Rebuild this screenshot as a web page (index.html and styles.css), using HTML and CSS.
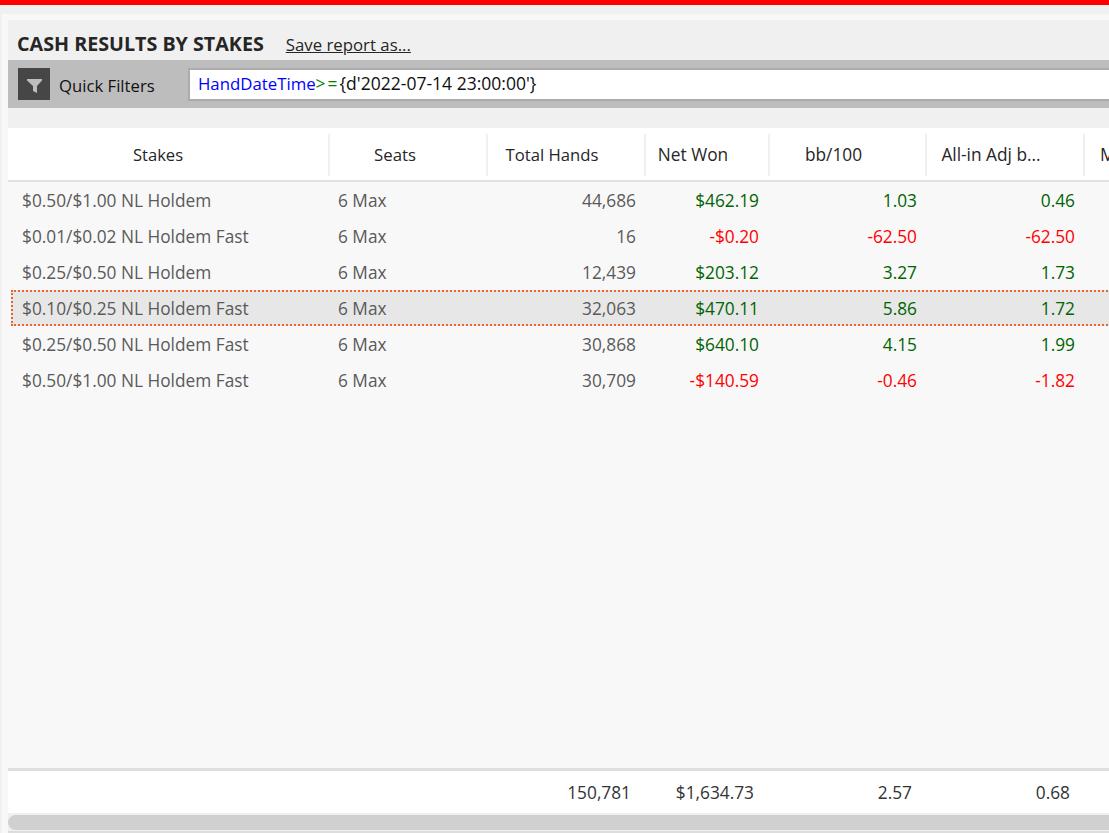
FILE: index.html
```html
<!DOCTYPE html>
<html lang="en">
<head>
<meta charset="utf-8">
<title>Cash Results by Stakes</title>
<link rel="stylesheet" href="styles.css">
</head>
<body>
<div class="redbar"></div>
<div class="shell">
<main class="panel">
  <div class="title-row">
    <h1 class="title">CASH RESULTS BY STAKES</h1>
    <a class="save">Save report as...</a>
  </div>
  <div class="filters">
    <span class="funnel"><svg class="funnel-icon" width="15" height="14" viewBox="0 0 15 14"><path d="M0 0h15v1.5L10 7v7L6 12V7L0 1.5z" fill="#bdbdbd"/></svg></span>
    <span class="filters-label">Quick Filters</span>
    <div class="query"><span class="q-field">HandDateTime</span><span class="q-op">&gt;=</span><span class="q-val">{d'2022-07-14 23:00:00'}</span></div>
  </div>
  <div class="spacer"></div>
  <div class="grid-row head">
    <div class="hc c1">Stakes</div>
    <div class="hc c2">Seats</div>
    <div class="hc c3">Total Hands</div>
    <div class="hc c4">Net Won</div>
    <div class="hc c5">bb/100</div>
    <div class="hc c6">All-in Adj b...</div>
    <div class="hc c7">M</div>
  </div>
  <div class="body">
    <div class="grid-row row"><div class="tl">$0.50/$1.00 NL Holdem</div><div class="s">6 Max</div><div class="n">44,686</div><div class="n w g">$462.19</div><div class="n g">1.03</div><div class="n g">0.46</div></div>
    <div class="grid-row row"><div class="tl">$0.01/$0.02 NL Holdem Fast</div><div class="s">6 Max</div><div class="n">16</div><div class="n w r">-$0.20</div><div class="n r">-62.50</div><div class="n r">-62.50</div></div>
    <div class="grid-row row"><div class="tl">$0.25/$0.50 NL Holdem</div><div class="s">6 Max</div><div class="n">12,439</div><div class="n w g">$203.12</div><div class="n g">3.27</div><div class="n g">1.73</div></div>
    <div class="grid-row row sel"><div class="tl">$0.10/$0.25 NL Holdem Fast</div><div class="s">6 Max</div><div class="n">32,063</div><div class="n w g">$470.11</div><div class="n g">5.86</div><div class="n g">1.72</div></div>
    <div class="grid-row row"><div class="tl">$0.25/$0.50 NL Holdem Fast</div><div class="s">6 Max</div><div class="n">30,868</div><div class="n w g">$640.10</div><div class="n g">4.15</div><div class="n g">1.99</div></div>
    <div class="grid-row row"><div class="tl">$0.50/$1.00 NL Holdem Fast</div><div class="s">6 Max</div><div class="n">30,709</div><div class="n w r">-$140.59</div><div class="n r">-0.46</div><div class="n r">-1.82</div></div>
  </div>
  <div class="grid-row foot">
    <div></div><div></div><div class="f">150,781</div><div class="f f-won">$1,634.73</div><div class="f">2.57</div><div class="f">0.68</div>
  </div>
  <div class="scrollbar"><div class="thumb"></div></div>
</main>
</div>
</body>
</html>
```
FILE: styles.css
```css
* { box-sizing: border-box; }
html, body { margin: 0; height: 833px; overflow: hidden; }
body { background: #f0f0f0; font-family: "Open Sans", "Noto Sans", sans-serif; font-size: 17.3px; color: #262626; }
.redbar { height: 5px; background: #ff0000; }
.shell { margin: 9px 0 0 2px; padding: 6px 0 0 6px; height: 819px; background: #f8f8f8; }
.panel { height: 813px; background: #f0f0f0; display: flex; flex-direction: column; }
.title-row { height: 40px; display: flex; align-items: center; padding: 8px 0 0 9px; flex: none; }
.title { margin: 0; font-size: 19.7px; font-weight: 700; color: #262626; line-height: 24px; }
.save { margin-left: 22px; font-size: 16.8px; text-decoration: underline; color: #262626; }
.filters { height: 48px; flex: none; background: #bdbdbd; display: flex; align-items: center; padding-left: 10px; }
.funnel { width: 32px; height: 32px; background: #464646; display: flex; align-items: center; justify-content: center; flex: none; }
.funnel-icon { margin-top: 4px; }
.filters-label { margin-left: 9px; width: 129px; font-size: 16.7px; color: #111; flex: none; padding-top: 2px; }
.query { flex: 1; height: 33px; background: #fff; border: 2px solid #ababab; border-right: 0; padding-left: 8px; font-size: 17.4px; line-height: 27px; color: #111; white-space: nowrap; }
.q-field { color: #0000ff; font-size: 16.8px; }
.q-op { color: #008000; letter-spacing: 2px; }
.q-val { font-size: 17.55px; }
.spacer { height: 20px; flex: none; }
.grid-row { display: grid; grid-template-columns: 322px 158px 158px 124px 157px 158px 23px; flex: none; }
.head { height: 54px; background: #fff; border-bottom: 2px solid #e2e2e2; padding-top: 6px; font-size: 17.3px; }
.hc { height: 42px; line-height: 42px; text-align: center; border-right: 2px solid #f0f0f0; padding-right: 28px; white-space: nowrap; overflow: hidden; color: #262626; }
.head .c1 { padding-right: 20px; font-size: 16.6px; }
.head .c2 { padding-right: 26px; font-size: 16.8px; }
.head .c3 { font-size: 16.7px; }
.head .c7 { border-right: 0; padding: 0 0 0 15px; text-align: left; overflow: visible; }
.body { flex: 1; background: #f8f8f8; padding-top: 1px; }
.row { height: 36px; line-height: 35px; color: #5a5a5a; }
.tl { padding-left: 14px; white-space: nowrap; }
.s { padding-left: 8px; }
.n { text-align: right; padding-right: 10px; }
.w { padding-right: 11px; }
.g { color: #006400; }
.r { color: #ff0000; }
.sel { position: relative; isolation: isolate; }
.sel::before { content: ""; position: absolute; z-index: -1; left: 3px; right: -3px; top: -1px; bottom: 1px; background: #e7e7e7; border: 2px dotted #e8662e; }
.foot { height: 45px; border-top: 3px solid #dedede; background: #fff; line-height: 44px; }
.f { text-align: right; padding-right: 15px; color: #333; }
.f-won { padding-right: 16px; }
.scrollbar { height: 20px; background: #f0f0f0; border-bottom: 2px solid #dddddd; flex: none; padding-top: 2px; }
.thumb { height: 15px; background: #d0d0d0; border-radius: 8px 0 0 8px; }
```
